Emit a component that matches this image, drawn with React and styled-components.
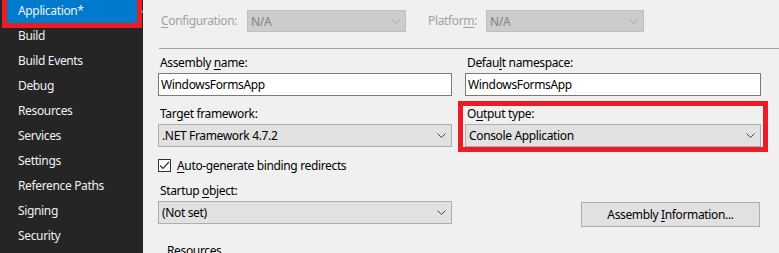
import styled, { createGlobalStyle } from 'styled-components';

const GlobalStyle = createGlobalStyle`
  html, body {
    margin: 0;
    padding: 0;
    background: #f0f0f0;
  }
  body {
    font-family: "Segoe UI", "Noto Sans", "Open Sans", sans-serif;
    font-size: 12px;
    letter-spacing: -0.35px;
    color: #000;
  }
`;

const Frame = styled.div`
  display: flex;
  height: 253px;
  overflow: hidden;
  background: #f0f0f0;
`;

// left navigation of the property pages
const Sidebar = styled.nav`
  position: relative;
  width: 143px;
  flex-shrink: 0;
  background: #252526;
  overflow: hidden;
  .tabDot {
    position: absolute;
    left: 141px;
    top: 10px;
    width: 3px;
    height: 3px;
    border-radius: 50%;
    background: #1c97ea;
  }
`;

const NavList = styled.ul`
  list-style: none;
  margin: -2px 0 0 0;
  padding: 0;
`;

const NavItem = styled.li`
  height: 25px;
  line-height: 25px;
  margin: 0 6px 0 7px;
  padding-left: 11px;
  color: #f1f1f1;
  white-space: nowrap;
  background: ${(p) => (p.$active ? '#007acc' : 'transparent')};
  outline: ${(p) => (p.$active ? '5px solid #ec1c24' : 'none')};
`;

const Content = styled.main`
  flex: 1;
  min-width: 0;
  padding-left: 15px;
  display: flex;
  flex-direction: column;
  > * {
    flex-shrink: 0;
  }
`;

const TopBar = styled.div`
  display: flex;
  align-items: flex-start;
  box-sizing: border-box;
  height: 49px;
  margin-left: 1px;
  padding-top: 10px;
  border-bottom: 1px solid #a0a0a0;
`;

const TopLabel = styled.span`
  width: ${(p) => p.$width}px;
  margin-left: ${(p) => p.$offset || 0}px;
  line-height: 22px;
  color: #a0a0a0;
  white-space: nowrap;
  u {
    text-underline-offset: 2px;
  }
`;

const Form = styled.div`
  display: grid;
  grid-template-columns: 294px 296px;
  column-gap: 13px;
  row-gap: 10px;
  padding-top: 6px;
`;

const Field = styled.div`
  display: flex;
  flex-direction: column;
`;

const Label = styled.label`
  height: 16px;
  line-height: 16px;
  margin-bottom: 2px;
  padding-left: 2px;
  white-space: nowrap;
  u {
    text-decoration: underline;
    text-underline-offset: 2px;
  }
`;

const TextBox = styled.div`
  box-sizing: border-box;
  height: 23px;
  line-height: 21px;
  padding-left: 2px;
  background: #fff;
  border: 1px solid #7a7a7a;
`;

const ComboBox = styled.div`
  box-sizing: border-box;
  display: flex;
  align-items: center;
  justify-content: space-between;
  width: ${(p) => (p.$width ? `${p.$width}px` : 'auto')};
  height: ${(p) => (p.$disabled ? 22 : 23)}px;
  padding: 0 5px 0 3px;
  background: ${(p) => (p.$disabled ? '#cccccc' : '#e1e1e1')};
  border: 1px solid ${(p) => (p.$disabled ? '#bfbfbf' : '#adadad')};
  color: ${(p) => (p.$disabled ? '#838383' : '#000')};
  white-space: nowrap;
  svg {
    flex-shrink: 0;
  }
`;

// red annotation drawn round the output type field
const Highlight = styled.div`
  margin: -5px -7px -5px -7px;
  padding: 0 2px;
  border: 5px solid #ec1c24;
`;

const CheckRow = styled.div`
  display: flex;
  align-items: center;
  height: 16px;
  gap: 6px;
  u {
    text-decoration: underline;
    text-underline-offset: 2px;
  }
`;

const CheckBox = styled.span`
  box-sizing: border-box;
  display: flex;
  align-items: center;
  justify-content: center;
  width: 13px;
  height: 13px;
  border: 1px solid #333;
  background: #fff;
`;

const ButtonCell = styled.div`
  display: flex;
  justify-content: flex-end;
  padding-top: 19px;
  padding-right: 1px;
`;

const Button = styled.button`
  box-sizing: border-box;
  width: 179px;
  height: 25px;
  font: inherit;
  letter-spacing: inherit;
  color: #000;
  background: #e1e1e1;
  border: 1px solid #adadad;
  u {
    text-decoration: underline;
    text-underline-offset: 2px;
  }
`;

const GroupTitle = styled.div`
  margin-top: 15px;
  padding-left: 9px;
  white-space: nowrap;
`;

const Chevron = ({ disabled }) => (
  <svg width="9" height="5" viewBox="0 0 9 5">
    <polyline
      points="0.5,0.5 4.5,4.5 8.5,0.5"
      fill="none"
      stroke={disabled ? '#a6a6a6' : '#404040'}
      strokeWidth="1"
    />
  </svg>
);

const navItems = [
  'Application*',
  'Build',
  'Build Events',
  'Debug',
  'Resources',
  'Services',
  'Settings',
  'Reference Paths',
  'Signing',
  'Security',
];

const App = () => {
  return (
    <>
      <GlobalStyle />
      <Frame>
        <Sidebar>
          <NavList>
            {navItems.map((item, i) => (
              <NavItem key={item} $active={i === 0}>
                {item}
              </NavItem>
            ))}
          </NavList>
          <span className="tabDot" />
        </Sidebar>
        <Content>
          <TopBar>
            <TopLabel $width={86} $offset={2}>
              <u>C</u>onfiguration:
            </TopLabel>
            <ComboBox $disabled $width={159}>
              N/A
              <Chevron disabled />
            </ComboBox>
            <TopLabel $width={58} $offset={22}>
              Platfor<u>m</u>:
            </TopLabel>
            <ComboBox $disabled $width={158}>
              N/A
              <Chevron disabled />
            </ComboBox>
          </TopBar>
          <Form>
            <Field>
              <Label>
                Assembly <u>n</u>ame:
              </Label>
              <TextBox>WindowsFormsApp</TextBox>
            </Field>
            <Field>
              <Label>
                Defau<u>l</u>t namespace:
              </Label>
              <TextBox>WindowsFormsApp</TextBox>
            </Field>
            <Field>
              <Label>
                Tar<u>g</u>et framework:
              </Label>
              <ComboBox>
                .NET Framework 4.7.2
                <Chevron />
              </ComboBox>
            </Field>
            <Highlight>
              <Field>
                <Label>
                  O<u>u</u>tput type:
                </Label>
                <ComboBox>
                  Console Application
                  <Chevron />
                </ComboBox>
              </Field>
            </Highlight>
            <CheckRow>
              <CheckBox>
                <svg width="11" height="9" viewBox="0 0 11 9">
                  <polyline
                    points="1,4.5 4,7.5 10,1"
                    fill="none"
                    stroke="#333"
                    strokeWidth="1.2"
                  />
                </svg>
              </CheckBox>
              <span>
                <u>A</u>uto-generate binding redirects
              </span>
            </CheckRow>
            <div />
            <Field>
              <Label>
                Startup <u>o</u>bject:
              </Label>
              <ComboBox>
                (Not set)
                <Chevron />
              </ComboBox>
            </Field>
            <ButtonCell>
              <Button>
                Assembly <u>I</u>nformation...
              </Button>
            </ButtonCell>
          </Form>
          <GroupTitle>Resources</GroupTitle>
        </Content>
      </Frame>
    </>
  );
};

export default App;
